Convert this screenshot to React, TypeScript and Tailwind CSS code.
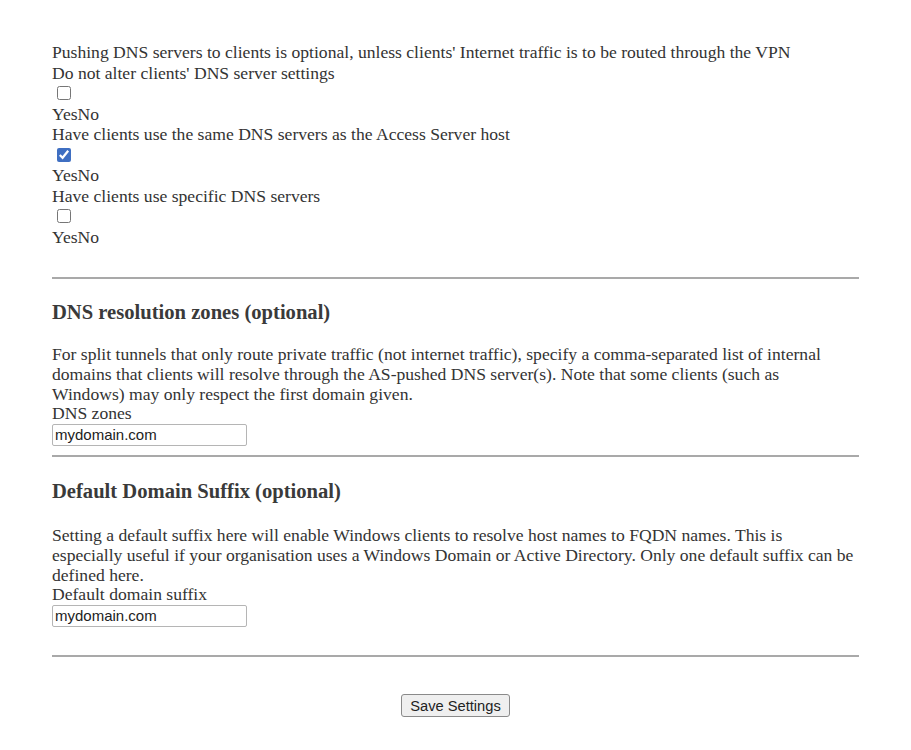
import React from 'react'

const serif = "font-['Liberation_Serif','Times_New_Roman',serif]"
const sans = "font-['Liberation_Sans',Arial,sans-serif]"

const YesNoOption = ({ label, checked }: { label: string; checked?: boolean }) => {
  const [on, setOn] = React.useState<boolean>(!!checked)
  return (
    <div className="flex flex-col">
      <div className="h-[20.5px] leading-[20.5px]">{label}</div>
      <div className="flex h-[20.5px] items-center">
        <input
          checked={on}
          className="ml-[5px] h-[14px] w-[14px] accent-[#3f6fc2]"
          onChange={e => setOn(e.target.checked)}
          type="checkbox"
        />
      </div>
      <div className="h-[20.5px] leading-[20.5px]">
        <span>Yes</span>
        <span>No</span>
      </div>
    </div>
  )
}

const Divider = () => <div className="h-[2px] w-full bg-[#a9a9a9]" />

const TextField = ({ value }: { value: string }) => {
  const [v, setV] = React.useState<string>(value)
  return (
    <input
      className={`${sans} mt-[1px] block h-[22px] w-[195px] rounded-[2px] border border-[#b5b5b5] bg-white px-[2px] text-[15px] text-[#222] outline-none`}
      onChange={e => setV(e.target.value)}
      type="text"
      value={v}
    />
  )
}

// lines are broken by hand so the wrap matches the original page
const Para = ({ lines, className }: { lines: string[]; className?: string }) => (
  <div className={className}>
    {lines.map(l => (
      <div className="whitespace-nowrap leading-[20px]" key={l}>
        {l}
      </div>
    ))}
  </div>
)

export default function App() {
  return (
    <div className={`${serif} min-h-[750px] w-full bg-white text-[17.6px] text-[#333]`}>
      <div className="box-content w-[807px] pl-[52px] pt-[42px]">
        <div className="h-[20.5px] whitespace-nowrap leading-[20.5px]">
          Pushing DNS servers to clients is optional, unless clients' Internet traffic is to be routed through the VPN
        </div>
        <YesNoOption label="Do not alter clients' DNS server settings" />
        <YesNoOption checked label="Have clients use the same DNS servers as the Access Server host" />
        <YesNoOption label="Have clients use specific DNS servers" />

        <div className="mt-[30px]">
          <Divider />
        </div>

        <h3 className="mt-[21px] text-[20.6px] font-bold leading-[24px] text-[#3a3a3a]">DNS resolution zones (optional)</h3>
        <Para
          className="mt-[20px]"
          lines={[
            'For split tunnels that only route private traffic (not internet traffic), specify a comma-separated list of internal',
            'domains that clients will resolve through the AS-pushed DNS server(s). Note that some clients (such as',
            'Windows) may only respect the first domain given.',
          ]}
        />
        <div className="leading-[19px]">DNS zones</div>
        <TextField value="mydomain.com" />
        <div className="mt-[9px]">
          <Divider />
        </div>

        <h3 className="mt-[22px] text-[20.6px] font-bold leading-[24px] text-[#3a3a3a]">Default Domain Suffix (optional)</h3>
        <Para
          className="mt-[22px]"
          lines={[
            'Setting a default suffix here will enable Windows clients to resolve host names to FQDN names. This is',
            'especially useful if your organisation uses a Windows Domain or Active Directory. Only one default suffix can be',
            'defined here.',
          ]}
        />
        <div className="leading-[19px]">Default domain suffix</div>
        <TextField value="mydomain.com" />
        <div className="mt-[28px]">
          <Divider />
        </div>

        <div className="mt-[37px] flex justify-center">
          <button
            className={`${sans} h-[23px] rounded-[3px] border border-[#8a8a8a] bg-[#efefef] px-[8px] text-[14.7px] leading-[20px] text-[#222] hover:bg-[#e5e5e5]`}
            type="button"
          >
            Save Settings
          </button>
        </div>
      </div>
    </div>
  )
}
